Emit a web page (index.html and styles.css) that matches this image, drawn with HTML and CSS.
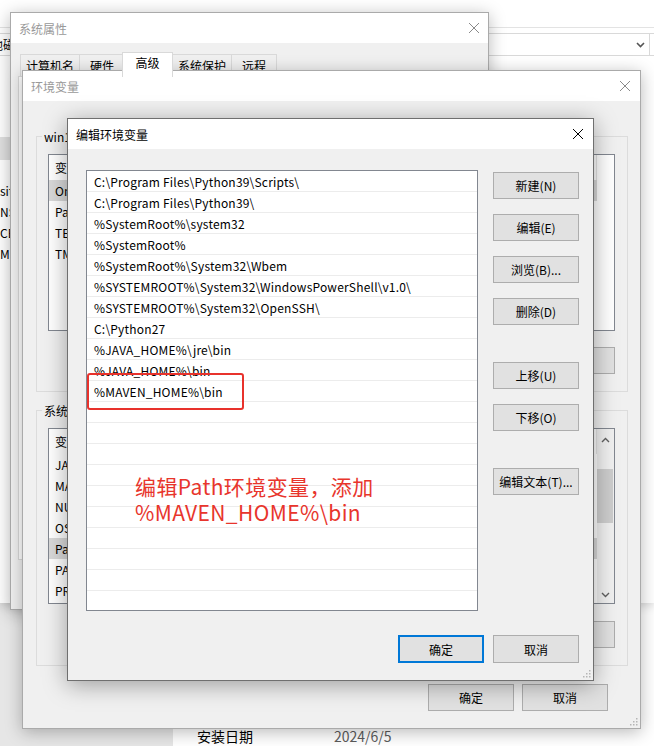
FILE: index.html
```html
<!DOCTYPE html>
<html lang="zh-CN">
<head>
<meta charset="utf-8">
<title>编辑环境变量</title>
<link rel="stylesheet" href="styles.css">
</head>
<body>

<!-- Settings app (bottom layer) -->
<div class="settings">
  <div class="settings-nav"></div>
  <div class="settings-main">
    <div class="settings-row"><span class="settings-key">安装日期</span><span class="settings-val">2024/6/5</span></div>
  </div>
</div>

<!-- Control panel window -->
<div class="cpanel">
  <div class="cp-top"></div>
  <div class="cp-bar">
    <div class="cp-crumb">地磁</div>
    <div class="cp-drop">
      <svg width="9" height="6" viewBox="0 0 9 6"><path d="M1 1 L4.5 4.5 L8 1" fill="none" stroke="#555" stroke-width="1.6"/></svg>
    </div>
    <div class="cp-tail"></div>
  </div>
  <div class="cp-tree">
    <div class="cp-sel"></div>
    <div class="cp-items">
      <div class="cp-item">sitor</div>
      <div class="cp-item">NS</div>
      <div class="cp-item">CE</div>
      <div class="cp-item">M</div>
    </div>
  </div>
</div>

<!-- 系统属性 -->
<div class="win sysprops">
  <div class="titlebar inactive">
    <span class="title">系统属性</span>
    <svg class="close" width="10" height="10" viewBox="0 0 10 10"><path d="M0 0 L10 10 M10 0 L0 10" stroke="currentColor" stroke-width="1"/></svg>
  </div>
  <div class="tabs">
    <div class="tab">计算机名</div>
    <div class="tab">硬件</div>
    <div class="tab tab-active">高级</div>
    <div class="tab">系统保护</div>
    <div class="tab">远程</div>
  </div>
  <div class="tab-panel"></div>
</div>

<!-- 环境变量 -->
<div class="win envvars">
  <div class="titlebar inactive">
    <span class="title">环境变量</span>
    <svg class="close" width="10" height="10" viewBox="0 0 10 10"><path d="M0 0 L10 10 M10 0 L0 10" stroke="currentColor" stroke-width="1"/></svg>
  </div>
  <div class="env-body">
    <fieldset class="group">
      <legend>win1 的用户变量(U)</legend>
      <div class="env-list">
        <div class="env-rows">
          <div class="env-head"><span class="col-name">变量</span><span class="col-val">值</span></div>
          <div class="env-row sel">OneDrive</div>
          <div class="env-row">Path</div>
          <div class="env-row">TEMP</div>
          <div class="env-row">TMP</div>
        </div>
      </div>
      <div class="btn-row">
        <div class="btn">新建(N)...</div>
        <div class="btn">编辑(E)...</div>
        <div class="btn">删除(D)</div>
      </div>
    </fieldset>
    <fieldset class="group group-sys">
      <legend>系统变量(S)</legend>
      <div class="env-list">
        <div class="env-rows">
          <div class="env-head"><span class="col-name">变量</span><span class="col-val">值</span></div>
          <div class="env-row">JAVA_HOME</div>
          <div class="env-row">MAVEN_HOME</div>
          <div class="env-row">NUMBER_OF_PROCESSORS</div>
          <div class="env-row">OS</div>
          <div class="env-row sel">Path</div>
          <div class="env-row">PATHEXT</div>
          <div class="env-row">PROCESSOR_ARCHITECTURE</div>
        </div>
        <div class="vscroll">
          <svg width="9" height="6" viewBox="0 0 9 6"><path d="M1 5 L4.5 1.5 L8 5" fill="none" stroke="#606060" stroke-width="1.4"/></svg>
          <div class="vtrack"><div class="vthumb"></div></div>
          <svg width="9" height="6" viewBox="0 0 9 6"><path d="M1 1 L4.5 4.5 L8 1" fill="none" stroke="#606060" stroke-width="1.4"/></svg>
        </div>
      </div>
      <div class="btn-row">
        <div class="btn">新建(W)...</div>
        <div class="btn">编辑(I)...</div>
        <div class="btn">删除(L)</div>
      </div>
    </fieldset>
    <div class="footer env-footer">
      <div class="btn">确定</div>
      <div class="btn">取消</div>
    </div>
  </div>
  <svg class="grip" width="9" height="9" viewBox="0 0 9 9"><g fill="#b5b5b5"><rect x="7" y="1" width="1.5" height="1.5"/><rect x="4" y="4" width="1.5" height="1.5"/><rect x="7" y="4" width="1.5" height="1.5"/><rect x="1" y="7" width="1.5" height="1.5"/><rect x="4" y="7" width="1.5" height="1.5"/><rect x="7" y="7" width="1.5" height="1.5"/></g></svg>
</div>

<!-- 编辑环境变量 -->
<div class="win editvar">
  <div class="titlebar">
    <span class="title">编辑环境变量</span>
    <svg class="close" width="10" height="10" viewBox="0 0 10 10"><path d="M0 0 L10 10 M10 0 L0 10" stroke="currentColor" stroke-width="1"/></svg>
  </div>
  <div class="edit-body">
    <div class="path-list">
      <div class="path-row">C:\Program Files\Python39\Scripts\</div>
      <div class="path-row">C:\Program Files\Python39\</div>
      <div class="path-row">%SystemRoot%\system32</div>
      <div class="path-row">%SystemRoot%</div>
      <div class="path-row">%SystemRoot%\System32\Wbem</div>
      <div class="path-row">%SYSTEMROOT%\System32\WindowsPowerShell\v1.0\</div>
      <div class="path-row">%SYSTEMROOT%\System32\OpenSSH\</div>
      <div class="path-row">C:\Python27</div>
      <div class="path-row">%JAVA_HOME%\jre\bin</div>
      <div class="path-row">%JAVA_HOME%\bin</div>
      <div class="path-row">%MAVEN_HOME%\bin</div>
      <div class="path-row"></div>
      <div class="path-row"></div>
      <div class="path-row"></div>
      <div class="path-row"></div>
      <div class="path-row"></div>
      <div class="path-row"></div>
      <div class="path-row"></div>
      <div class="path-row"></div>
      <div class="path-row"></div>
      <div class="path-row last"></div>
      <div class="mark-box"></div>
      <div class="note">编辑Path环境变量，添加<br>%MAVEN_HOME%\bin</div>
    </div>
    <div class="side-btns">
      <div class="btn">新建(N)</div>
      <div class="btn">编辑(E)</div>
      <div class="btn">浏览(B)...</div>
      <div class="btn">删除(D)</div>
      <div class="btn spaced">上移(U)</div>
      <div class="btn">下移(O)</div>
      <div class="btn spaced">编辑文本(T)...</div>
    </div>
  </div>
  <div class="footer edit-footer">
    <div class="btn btn-default">确定</div>
    <div class="btn btn-tall">取消</div>
  </div>
  <svg class="grip" width="9" height="9" viewBox="0 0 9 9"><g fill="#b5b5b5"><rect x="7" y="1" width="1.5" height="1.5"/><rect x="4" y="4" width="1.5" height="1.5"/><rect x="7" y="4" width="1.5" height="1.5"/><rect x="1" y="7" width="1.5" height="1.5"/><rect x="4" y="7" width="1.5" height="1.5"/><rect x="7" y="7" width="1.5" height="1.5"/></g></svg>
</div>

</body>
</html>
```

FILE: styles.css
```css
* { box-sizing: border-box; }
html, body { margin: 0; padding: 0; }
body {
  width: 654px;
  height: 746px;
  overflow: hidden;
  position: relative;
  background: #fff;
  font-family: "Noto Sans CJK SC", "Noto Sans", sans-serif;
  font-size: 12px;
  color: #000;
}

/* ---------- settings app ---------- */
.settings {
  position: absolute;
  left: 0; top: 0;
  width: 654px; height: 746px;
  display: grid;
  grid-template-columns: 173px 1fr;
}
.settings-nav { background: #e6e6e6; }
.settings-main {
  background: #fff;
  display: flex;
  align-items: flex-end;
  padding-left: 24px;
}
.settings-row {
  display: flex;
  font-size: 14px;
  line-height: 20px;
  margin-bottom: 0;
}
.settings-key { width: 137px; color: #000; }
.settings-val { color: #5c5c5c; }

/* ---------- control panel window ---------- */
.cpanel {
  position: absolute;
  left: 0; top: 0;
  width: 654px; height: 603px;
  background: #fff;
  overflow: hidden;
  box-shadow: 0 2px 10px rgba(0,0,0,0.18);
}
.cp-top { height: 28px; border-bottom: 1px solid #e3e3e3; }
.cp-bar {
  margin-top: 5px;
  height: 23px;
  border-top: 1px solid #d9d9d9;
  border-bottom: 1px solid #d9d9d9;
  display: flex;
  align-items: center;
}
.cp-crumb { flex: 1; margin-left: -9px; line-height: 21px; white-space: nowrap; }
.cp-drop {
  width: 18px; height: 21px;
  border-right: 1px solid #d9d9d9;
  display: flex; align-items: center; justify-content: center;
}
.cp-tail { width: 4px; }
.cp-tree { width: 172px; padding-top: 81px; }
.cp-sel { height: 23px; background: #e0e0e0; }
.cp-items { margin-top: 20px; }
.cp-item { line-height: 21px; white-space: nowrap; }

/* ---------- generic window ---------- */
.win {
  position: absolute;
  display: flex;
  flex-direction: column;
  background: #f0f0f0;
  border: 1px solid #aaaaaa;
  box-shadow: 0 3px 16px rgba(0,0,0,0.28);
}
.titlebar {
  flex: none;
  height: 30px;
  background: #fff;
  display: flex;
  align-items: center;
  justify-content: space-between;
  padding: 0 10px 0 8px;
  color: #000;
}
.titlebar.inactive { color: #999; }
.titlebar .close { display: block; }
.titlebar.inactive .close { color: #8a8a8a; }

.btn {
  flex: none;
  width: 86px;
  height: 27px;
  background: #e1e1e1;
  border: 1px solid #adadad;
  display: flex;
  align-items: center;
  justify-content: center;
  white-space: nowrap;
  color: #000;
}
.grip { position: absolute; right: 2px; bottom: 2px; }

/* ---------- 系统属性 ---------- */
.sysprops { left: 10px; top: 12px; width: 479px; height: 598px; }
.sysprops .titlebar { padding-right: 9px; }
.tabs {
  display: flex;
  align-items: flex-end;
  height: 24px;
  margin: 9px 0 0 9px;
}
.tab {
  height: 22px;
  min-width: 46px;
  padding: 0 5px;
  border: 1px solid #d9d9d9;
  border-bottom: none;
  margin-right: -1px;
  line-height: 21px;
  text-align: center;
  background: #f0f0f0;
}
.tab-active {
  position: relative;
  z-index: 1;
  height: 25px;
  margin: 0 -1px -1px -2px;
  min-width: 51px;
  background: #fff;
  line-height: 19px;
}
.tab-panel {
  height: 484px;
  margin: 0 6px 0 7px;
  background: #fff;
  border: 1px solid #d9d9d9;
}

/* ---------- 环境变量 ---------- */
.envvars { left: 22px; top: 70px; width: 619px; height: 659px; }
.env-body { padding: 27px 12px 0 13px; }
.group {
  margin: 0;
  padding: 0 12px 17px 11px;
  border: 1px solid #dcdcdc;
  min-width: 0;
}
.group legend {
  padding: 0 2px;
  margin-left: -6px;
  line-height: 17px;
  white-space: nowrap;
}
.group-sys { margin-top: 10px; }
.env-list {
  margin-top: 9px;
  height: 177px;
  background: #fff;
  border: 1px solid #828790;
  display: flex;
  overflow: hidden;
}
.group-sys .env-list { height: 176px; }
.env-rows { flex: 1; padding-right: 17px; }
.env-head {
  height: 25px;
  line-height: 25px;
  display: flex;
  border-right: 1px solid #e5e5e5;
}
.col-name { width: 160px; padding-left: 6px; }
.col-val { flex: 1; padding-left: 6px; }
.env-row { height: 21px; line-height: 21px; padding-left: 6px; white-space: nowrap; }
.env-row.sel { background: #d9d9d9; }
.group-sys .env-rows { padding-right: 0; }
.vscroll {
  width: 17px;
  background: #f0f0f0;
  display: flex;
  flex-direction: column;
  align-items: center;
  padding: 8px 0 5px;
}
.vtrack { flex: 1; width: 100%; padding: 26px 1px 0 0; }
.vthumb { height: 54px; background: #cdcdcd; }
.btn-row {
  display: flex;
  justify-content: flex-end;
  gap: 8px;
  margin-top: 16px;
}
.group-sys .btn-row { margin-top: 17px; }
.footer { display: flex; justify-content: flex-end; }
.env-footer { gap: 8px; margin: 18px 20px 0 0; }

/* ---------- 编辑环境变量 ---------- */
.editvar {
  left: 67px; top: 118px; width: 527px; height: 563px;
  border-color: #6f6f6f;
  box-shadow: 0 4px 22px rgba(0,0,0,0.35);
}
.edit-body {
  display: grid;
  grid-template-columns: 392px 86px;
  column-gap: 15px;
  padding: 21px 14px 0 18px;
}
.path-list {
  position: relative;
  height: 441px;
  background: #fff;
  border: 1px solid #828790;
  overflow: hidden;
}
.path-row {
  height: 21px;
  line-height: 18px;
  padding: 2px 0 0 7px;
  border-bottom: 1px solid #ececec;
  white-space: nowrap;
  letter-spacing: 0.2px;
}
.path-row.last { border-bottom: none; }
.mark-box {
  position: absolute;
  left: 0; top: 202px;
  width: 157px; height: 37px;
  border: 2px solid #e8322c;
  border-radius: 3px;
}
.note {
  position: absolute;
  left: 48px; top: 302px;
  font-size: 21px;
  line-height: 26px;
  letter-spacing: 0.4px;
  color: #e8352c;
  white-space: nowrap;
}
.side-btns {
  display: flex;
  flex-direction: column;
  gap: 15px;
  padding-top: 2px;
}
.side-btns .spaced { margin-top: 22px; }
.edit-footer { gap: 9px; padding: 24px 14px 0 0; }
.btn-default { height: 28px; border: 2px solid #0078d7; }
.btn-tall { height: 28px; }
```
